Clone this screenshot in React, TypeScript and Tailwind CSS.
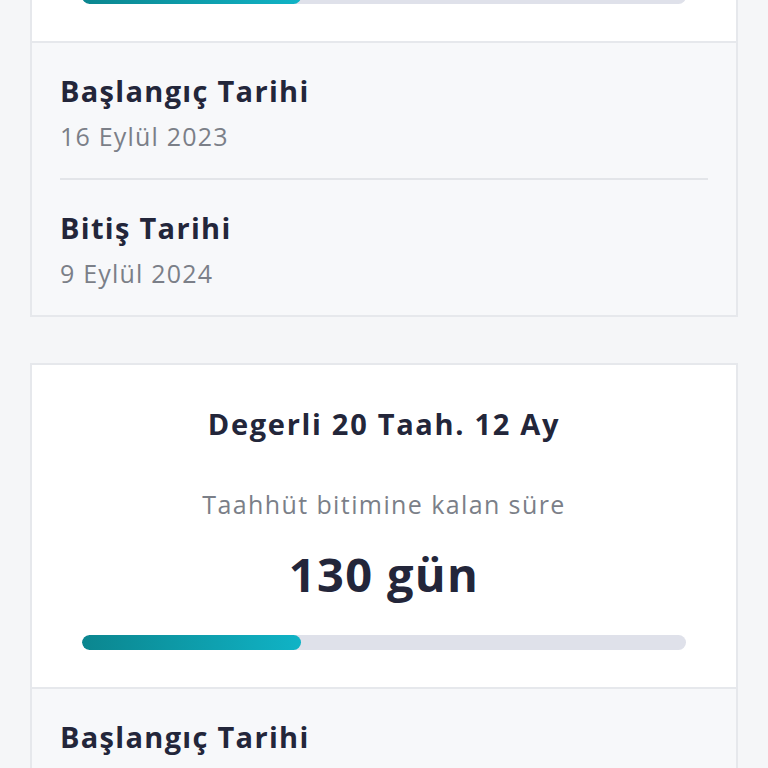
import React from "react";

type Plan = {
  name: string;
  remainingLabel: string;
  remaining: string;
  progress: number;
  start: string;
  end: string;
};

const plans: Plan[] = [
  {
    name: "Degerli 20 Taah. 12 Ay",
    remainingLabel: "Taahhüt bitimine kalan süre",
    remaining: "130 gün",
    progress: 36.3,
    start: "16 Eylül 2023",
    end: "9 Eylül 2024",
  },
  {
    name: "Degerli 20 Taah. 12 Ay",
    remainingLabel: "Taahhüt bitimine kalan süre",
    remaining: "130 gün",
    progress: 36.3,
    start: "16 Eylül 2023",
    end: "9 Eylül 2024",
  },
];

function ProgressBar({ value }: { value: number }) {
  return (
    <div className="h-[15px] w-full rounded-full bg-[#dfe1ea] overflow-hidden">
      <div
        className="h-full rounded-full bg-gradient-to-r from-[#0b868f] to-[#10b3c6]"
        style={{ width: `${value}%` }}
      />
    </div>
  );
}

function DateRow({ label, value }: { label: string; value: string }) {
  return (
    <div className="flex flex-col">
      <span className="text-[29px] leading-[36px] font-bold tracking-[1.3px] text-[#23263a]">{label}</span>
      <span className="mt-[11px] text-[25px] leading-[32px] tracking-[1.2px] text-[#7b7f88]">{value}</span>
    </div>
  );
}

function PlanCard({ plan }: { plan: Plan }) {
  return (
    <div className="border-2 border-[#e6e8ec] bg-white">
      <div className="flex flex-col items-center px-[50px] pt-[41px] pb-[37px]">
        <h2 className="text-[29px] leading-[36px] font-bold tracking-[1.7px] text-[#23263a]">{plan.name}</h2>
        <p className="mt-[46px] text-[25px] leading-[32px] tracking-[1.4px] text-[#7b7f88]">{plan.remainingLabel}</p>
        <p className="mt-[26px] text-[47px] leading-[56px] font-bold tracking-[1.3px] text-[#23263a]">{plan.remaining}</p>
        <div className="mt-[33px] w-full">
          <ProgressBar value={plan.progress} />
        </div>
      </div>
      <div className="border-t-2 border-[#e6e8ec] bg-[#f7f8fa] px-[28px] pt-[30px] pb-[26px]">
        <DateRow label="Başlangıç Tarihi" value={plan.start} />
        <div className="mt-[26px] mb-[30px] h-[2px] bg-[#e3e5e9]" />
        <DateRow label="Bitiş Tarihi" value={plan.end} />
      </div>
    </div>
  );
}

export default function App() {
  return (
    <div
      className="h-[768px] w-[768px] overflow-hidden bg-[#f5f6f8]"
      style={{ fontFamily: "'Open Sans', 'Noto Sans', sans-serif" }}
    >
      <div className="mx-[30px] mt-[-283px] flex flex-col gap-[46px]">
        {plans.map((p, i) => (
          <PlanCard key={i} plan={p} />
        ))}
      </div>
    </div>
  );
}
